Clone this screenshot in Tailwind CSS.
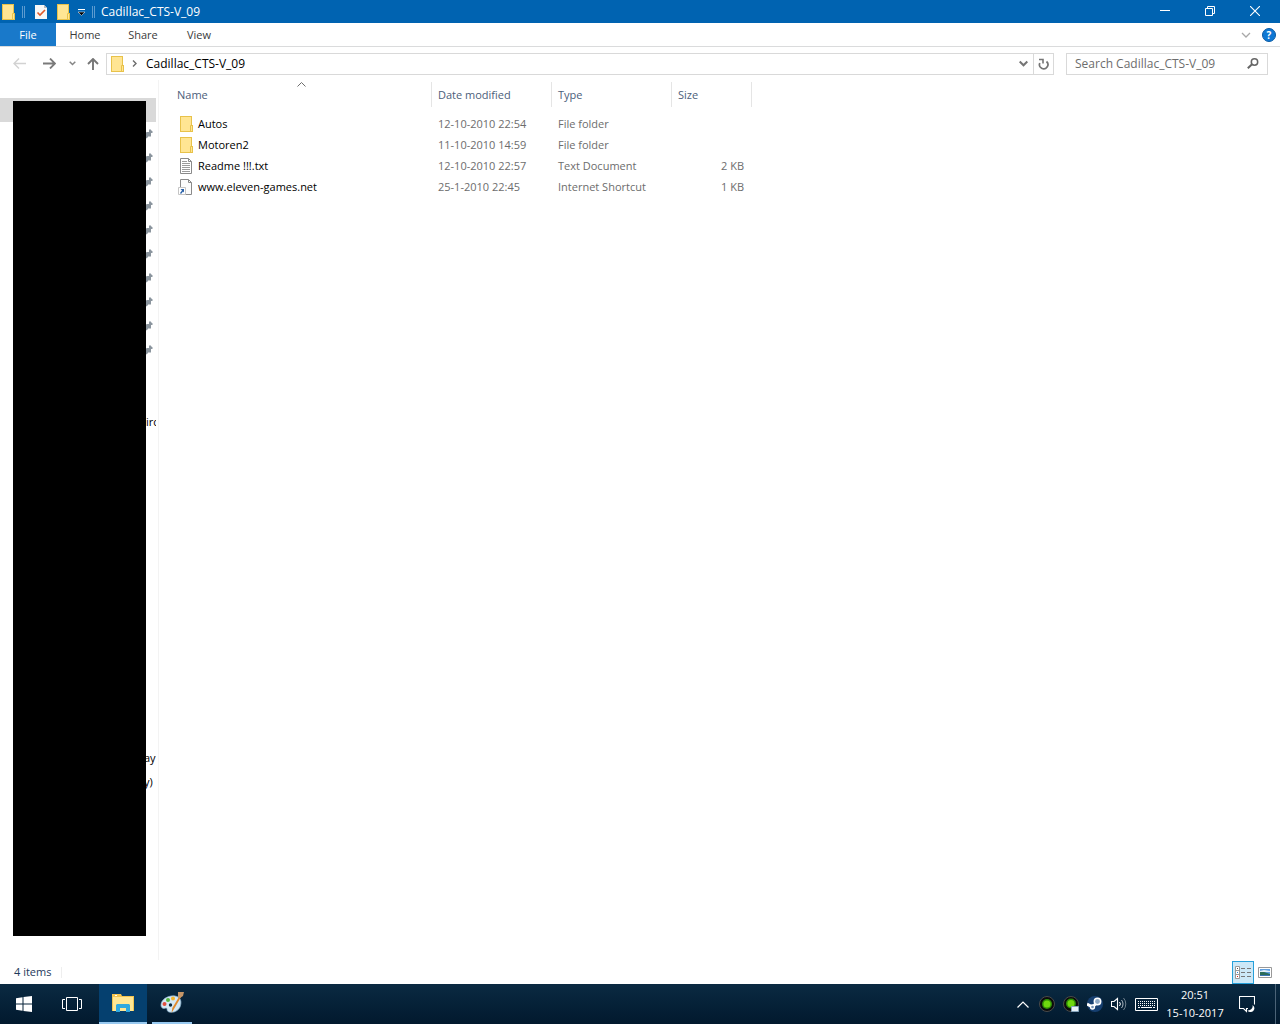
<!DOCTYPE html>
<html lang="en">
<head>
  <meta charset="UTF-8" />
  <meta name="viewport" content="width=device-width, initial-scale=1.0"/>
  <title>Cadillac_CTS-V_09</title>
  <script src="https://cdn.jsdelivr.net/npm/@tailwindcss/browser@4"></script>
</head>
<body class="h-screen flex flex-col overflow-hidden bg-white text-black text-[11px] leading-[16px] font-['Segoe_UI','Open_Sans',sans-serif]">

  <!-- Shared icons -->
  <svg class="hidden">
    <symbol id="folder" viewBox="0 0 13 16">
      <path d="M0 0h12v9h1v7H0z" fill="#e8c24a"/>
      <path d="M1 1h10v14H1z" fill="#ffe593"/>
      <path d="M11 10h1v5h-1z" fill="#ffe593"/>
      <path d="M10.500 15V9.500h2" stroke="#e8c24a" fill="none"/>
    </symbol>
    <symbol id="pin" viewBox="0 0 8 10">
      <path d="M4 1l1-1 3 3-1 1-1 0v3L5 8 4 7 2 9 0 10 0 4 2 3h2z" fill="#8b959e"/>
    </symbol>
  </svg>

  <!-- Title bar -->
  <header class="h-[23px] shrink-0 flex items-center bg-[#0063b1] text-white">
    <svg class="w-[13px] h-4 ml-[2px]"><use href="#folder"/></svg>
    <span class="w-[3px] h-3 ml-[7px] border-x border-[#5c9bd0]"></span>
    <button class="ml-[10px]" aria-label="Properties">
      <svg class="w-3 h-4" viewBox="0 0 12 16"><path d="M0 1h9l3 3v11H0z" fill="#f7f7f7"/><path d="M9 1v3h3" fill="#bbb"/><path d="M2.500 8.500L5 11l5-5" fill="none" stroke="#e0592a" stroke-width="1.600"/></svg>
    </button>
    <button class="ml-[10px]" aria-label="New folder"><svg class="w-[13px] h-4"><use href="#folder"/></svg></button>
    <button class="ml-2" aria-label="Customize Quick Access Toolbar">
      <svg class="w-[7px] h-[7px] mt-[2px]" viewBox="0 0 7 7"><path d="M0 .5h7" stroke="#fff"/><path d="M0 3h7L3.500 6.500z" fill="#000" stroke="#fff" stroke-width=".5"/></svg>
    </button>
    <span class="w-[3px] h-3 ml-[7px] border-x border-[#5c9bd0]"></span>
    <h1 class="ml-[6px] flex-1 text-[12px]">Cadillac_CTS-V_09</h1>
    <div class="flex h-full items-center pb-[2px] pr-[2px]">
      <button class="w-[45px] h-full flex items-center justify-center" aria-label="Minimize"><svg class="w-[10px] h-[10px]" viewBox="0 0 10 10"><path d="M0 4.500h10" stroke="#fff"/></svg></button>
      <button class="w-[45px] h-full flex items-center justify-center" aria-label="Restore"><svg class="w-[10px] h-[10px]" viewBox="0 0 10 10"><path d="M.5 2.500h7v7h-7zM2.500 2.500v-2h7v7h-2" fill="none" stroke="#fff"/></svg></button>
      <button class="w-[46px] h-full flex items-center justify-center" aria-label="Close"><svg class="w-[10px] h-[10px]" viewBox="0 0 10 10"><path d="M0 0l10 10M10 0L0 10" stroke="#fff" stroke-width="1.100"/></svg></button>
    </div>
  </header>

  <!-- Ribbon tabs -->
  <div class="h-6 shrink-0 flex items-stretch border-b border-[#dadbdc] text-[#3b3b3b]">
    <button class="w-[56px] bg-[#1979ca] text-white">File</button>
    <button class="w-[58px]">Home</button>
    <button class="w-[58px]">Share</button>
    <button class="w-[54px]">View</button>
    <div class="ml-auto flex items-center gap-[11px] pr-1">
      <button aria-label="Expand the ribbon"><svg class="w-[10px] h-[6px]" viewBox="0 0 10 6"><path d="M1 1l4 4 4-4" fill="none" stroke="#a8a8a8" stroke-width="1.300"/></svg></button>
      <button class="w-[14px] h-[14px] rounded-full bg-[#0f78d4] border border-[#0a5ba5] text-white text-[10px] leading-[12px] font-bold" aria-label="Help">?</button>
    </div>
  </div>

  <!-- Navigation and address -->
  <div class="h-[33px] shrink-0 flex items-center pr-3">
    <button class="ml-[13px]" aria-label="Back"><svg class="w-[13px] h-[11px]" viewBox="0 0 13 11"><path d="M13 5.500H1M6 .5l-5 5 5 5" fill="none" stroke="#d2d2d2" stroke-width="1.400"/></svg></button>
    <button class="ml-[17px]" aria-label="Forward"><svg class="w-[13px] h-[11px]" viewBox="0 0 13 11"><path d="M0 5.500h12M7 .5l5 5-5 5" fill="none" stroke="#7a7a7a" stroke-width="1.800"/></svg></button>
    <button class="ml-[13px]" aria-label="Recent locations"><svg class="w-[7px] h-[5px]" viewBox="0 0 7 5"><path d="M.7.700l2.800 2.800L6.300.7" fill="none" stroke="#858585" stroke-width="1.500"/></svg></button>
    <button class="ml-[11px]" aria-label="Up"><svg class="w-3 h-[12px]" viewBox="0 0 12 12"><path d="M6 12V1M1 6l5-5 5 5" fill="none" stroke="#767676" stroke-width="1.900"/></svg></button>
    <div class="ml-[7px] h-[22px] flex-1 flex items-center border border-[#d9d9d9]">
      <svg class="w-[13px] h-4 ml-1"><use href="#folder"/></svg>
      <svg class="w-[5px] h-[7px] ml-2" viewBox="0 0 5 7"><path d="M1 .5l3 3-3 3" fill="none" stroke="#6b6b6b" stroke-width="1.400"/></svg>
      <a href="#" class="ml-[9px] flex-1 text-[12px] leading-[18px]">Cadillac_CTS-V_09</a>
      <button class="mr-[5px]" aria-label="Previous locations"><svg class="w-[9px] h-[7px]" viewBox="0 0 9 7"><path d="M.7 1.500l3.800 3.800 3.800-3.800" fill="none" stroke="#757575" stroke-width="2"/></svg></button>
      <button class="w-[20px] h-full flex items-center justify-center border-l border-[#d9d9d9]" aria-label="Refresh"><svg class="w-[11px] h-[12px]" viewBox="0 0 11 12"><path d="M8.500 3.500A4.200 4.200 0 1 1 1.800 5" fill="none" stroke="#757575" stroke-width="1.700"/><path d="M1 1.500h4v4" fill="none" stroke="#757575" stroke-width="1.600"/></svg></button>
    </div>
    <form class="ml-3 w-[202px] h-[22px] flex items-center border border-[#d9d9d9] pl-2 pr-2">
      <input type="text" aria-label="Search" placeholder="Search Cadillac_CTS-V_09" class="min-w-0 flex-1 text-[12px] outline-none placeholder:text-[#6d6d6d]"/>
      <button aria-label="Start search"><svg class="w-3 h-[11px]" viewBox="0 0 12 11"><circle cx="7.500" cy="4" r="3.200" fill="none" stroke="#666" stroke-width="1.500"/><path d="M5 6.300L.8 10.300" stroke="#666" stroke-width="2"/></svg></button>
    </form>
  </div>

  <!-- Panes -->
  <main class="flex-1 min-h-0 flex">
    <nav class="relative w-[159px] shrink-0 overflow-hidden border-r border-[#f3f3f3] pt-[18px] pr-[2px]">
      <div class="h-6 bg-[#d9d9d9]"></div>
      <ul id="pins"></ul>
      <div class="mt-6 h-6"></div>
      <div class="h-6 pl-[146px] leading-6 overflow-hidden whitespace-nowrap">irc</div>
      <div class="mt-[312px] h-6 pl-[144px] leading-6 whitespace-nowrap">ay</div>
      <div class="h-6 pl-[144px] leading-6 whitespace-nowrap">y)</div>
      <div class="absolute left-[13px] right-[12px] top-[21px] bottom-6 bg-black"></div>
    </nav>

    <div class="flex-1 pt-[2px]">
      <table class="table-fixed border-separate border-spacing-0 w-[593px] text-[#6d6d6d]">
        <thead class="text-[#4c607a]">
          <tr class="h-[25px] text-left">
            <th class="relative w-[273px] pl-[18px] font-normal border-r border-[#e5e5e5]">Name
              <svg class="absolute left-[138px] top-0 w-[9px] h-[5px]" viewBox="0 0 9 5"><path d="M.5 4.500l4-4 4 4" fill="none" stroke="#6d6d6d"/></svg>
            </th>
            <th class="w-[120px] pl-[6px] font-normal border-r border-[#e5e5e5]">Date modified</th>
            <th class="w-[120px] pl-[6px] font-normal border-r border-[#e5e5e5]">Type</th>
            <th class="w-[80px] pl-[6px] font-normal border-r border-[#e5e5e5]">Size</th>
          </tr>
          <tr class="h-[6px]"></tr>
        </thead>
        <tbody>
          <tr class="h-[21px]">
            <td class="pl-[21px]"><a href="#" class="flex items-center gap-[5px] text-black"><svg class="w-[13px] h-4 shrink-0"><use href="#folder"/></svg>Autos</a></td>
            <td class="pl-[6px]">12-10-2010 22:54</td><td class="pl-[6px]">File folder</td><td></td>
          </tr>
          <tr class="h-[21px]">
            <td class="pl-[21px]"><a href="#" class="flex items-center gap-[5px] text-black"><svg class="w-[13px] h-4 shrink-0"><use href="#folder"/></svg>Motoren2</a></td>
            <td class="pl-[6px]">11-10-2010 14:59</td><td class="pl-[6px]">File folder</td><td></td>
          </tr>
          <tr class="h-[21px]">
            <td class="pl-[21px]"><a href="#" class="flex items-center gap-[5px] text-black">
              <svg class="w-[13px] h-4 shrink-0" viewBox="0 0 13 16"><path d="M.5.5h8l3 3v12H.5z" fill="#fff" stroke="#8a8a8a"/><path d="M8.500.5v3h3" fill="none" stroke="#8a8a8a"/><path d="M2 3.500h5M2 5.500h8M2 7.500h8M2 9.500h8M2 11.500h8M2 13.500h8" stroke="#9b9b9b"/></svg>Readme !!!.txt</a></td>
            <td class="pl-[6px]">12-10-2010 22:57</td><td class="pl-[6px]">Text Document</td><td class="pr-2 text-right">2 KB</td>
          </tr>
          <tr class="h-[21px]">
            <td class="pl-[19px]"><a href="#" class="flex items-center gap-[5px] text-black">
              <svg class="w-[15px] h-4 shrink-0" viewBox="0 0 15 16"><path d="M2.500.5h8l3 3v12h-11z" fill="#fcfcfc" stroke="#8a8a8a"/><path d="M10.500.5v3h3" fill="none" stroke="#8a8a8a"/><path d="M.5 8.500h7v7h-7z" fill="#fff" stroke="#c5c5c5"/><path d="M2.500 10H6v3.500l-1-1L3 15l-1-1 2-2.500z" fill="#2860a8"/></svg>www.eleven-games.net</a></td>
            <td class="pl-[6px]">25-1-2010 22:45</td><td class="pl-[6px]">Internet Shortcut</td><td class="pr-2 text-right">1 KB</td>
          </tr>
        </tbody>
      </table>
    </div>
  </main>

  <!-- Status bar -->
  <div class="h-6 shrink-0 flex items-center pl-[14px] pr-2 text-[#1e395b]">
    <span class="leading-[18px]">4 items</span>
    <span class="h-[11px] ml-[10px] border-l border-[#eee]"></span>
    <button class="ml-auto mt-[1px] w-[22px] h-[23px] flex items-center justify-center bg-[#cce8f7] border border-[#26a0da]" aria-label="Details view">
      <svg class="w-4 h-[13px]" viewBox="0 0 16 13"><path d="M.5.5h4v12h-4zM.5 4.500h4M.5 8.500h4" fill="#fff" stroke="#999"/><path d="M2 2h1v1H2z" fill="#555"/><path d="M2 6h1v1H2z" fill="#2780d8"/><path d="M2 10h1v1H2z" fill="#d22"/><path d="M6 2.500h4m2 0h4M6 6.500h4m2 0h4M6 10.500h4m2 0h4" stroke="#777"/></svg>
    </button>
    <button class="ml-1" aria-label="Large icons view">
      <svg class="w-[14px] h-[11px]" viewBox="0 0 14 11"><path d="M.5.5h13v10H.5z" fill="#fff" stroke="#999"/><path d="M2 2h10v7H2z" fill="#5f9fe0"/><path d="M2 4l4-1 6 1v1H2z" fill="#e3eff8"/><path d="M2 5l4 0 6 2v1H2z" fill="#2b6b58"/><path d="M2 8h10v1H2z" fill="#3b74b4"/></svg>
    </button>
  </div>

  <!-- Taskbar -->
  <footer class="h-10 shrink-0 flex items-stretch bg-linear-to-b from-[#0b2a42] to-[#02192e] text-white">
    <button class="w-12 flex items-center justify-center" aria-label="Start">
      <svg class="w-4 h-4" viewBox="0 0 16 16"><path d="M0 2.200L6.500 1.300v6.200H0zM7.500 1.100L16 0v7.500H7.500zM0 8.500h6.500v6.200L0 13.800zM7.500 8.500H16V16l-8.500-1.100z" fill="#fff"/></svg>
    </button>
    <button class="w-12 flex items-center justify-center" aria-label="Task view">
      <svg class="w-5 h-[14px]" viewBox="0 0 20 14"><path d="M4.500.5h11v13h-11zM3 2.500H.5v9H3M17 2.500h2.500v9H17" fill="none" stroke="#fff"/></svg>
    </button>
    <button class="ml-[3px] w-12 flex items-center justify-center bg-[#05406f] border-b-2 border-[#98c9f0]" aria-label="File Explorer">
      <svg class="w-[22px] h-[18px]" viewBox="0 0 22 18"><path d="M0 0h9l1 2h12v15H0z" fill="#f2c44f"/><path d="M1 3h20v14H1z" fill="#ffe794"/><path d="M3 1h2v1H3z" fill="#fff"/><path d="M4 11l1-1h12l1 1v7h-4v-4H8v4H4z" fill="#2fa9e0"/></svg>
    </button>
    <button class="ml-[5px] w-10 flex items-center justify-center border-b-2 border-[#98c9f0]" aria-label="Paint">
      <svg class="w-6 h-6" viewBox="0 0 24 24"><path d="M1 14C1 8 9 4 15 5c6 1 7 6 5 11-2 4-6 6-11 5-3-1-1-4-3-4-3 1-5 0-5-3z" fill="#d4e8f5" stroke="#8eb8d3" stroke-width=".7"/><circle cx="4.500" cy="13" r="2" fill="#df4e3f"/><circle cx="8" cy="9" r="2" fill="#56b63f"/><circle cx="13" cy="7.500" r="2" fill="#f3b52c"/><circle cx="10.500" cy="14" r="1.700" fill="#0b2a42"/><path d="M19.500 5l1.500 1-7 12-2.500 4 .8-5z" fill="#e28a2d"/><path d="M18 1l6 0-1 4-3 2-2-1z" fill="#c59668"/></svg>
    </button>

    <div class="ml-auto flex items-center">
      <button aria-label="Show hidden icons"><svg class="w-3 h-[7px]" viewBox="0 0 12 7"><path d="M.5 6.500L6 1l5.500 5.500" fill="none" stroke="#fff" stroke-width="1.200"/></svg></button>
      <svg class="ml-[10px] w-4 h-4" viewBox="0 0 16 16"><circle cx="8" cy="8" r="7.500" fill="#0c0c0c" stroke="#4a4a4a"/><circle cx="8" cy="8" r="5" fill="#2f8f06"/><circle cx="8" cy="8" r="3.500" fill="#6fd80e"/></svg>
      <svg class="ml-2 w-4 h-4" viewBox="0 0 16 16"><circle cx="8" cy="8" r="7.500" fill="#0c0c0c" stroke="#4a4a4a"/><circle cx="8" cy="7.500" r="5" fill="#2f8f06"/><circle cx="8" cy="7.500" r="3.500" fill="#6fd80e"/><path d="M8.500 10.500h7v5h-7z" fill="#e8f1f7" stroke="#86a5bd"/></svg>
      <svg class="ml-2 w-4 h-4" viewBox="0 0 16 16"><circle cx="8" cy="8" r="8" fill="#163f70"/><path d="M0 8l5.500 3 4-4" stroke="#fff" stroke-width="3" fill="none"/><circle cx="10.500" cy="5.500" r="3.200" fill="#8fa9c4" stroke="#fff" stroke-width="1.500"/><circle cx="5.500" cy="11" r="2" fill="#7895b5" stroke="#fff" stroke-width="1.300"/></svg>
      <svg class="ml-2 w-4 h-[14px]" viewBox="0 0 16 14"><path d="M.5 4.500H3l3.500-3v11L3 9.500H.5z" fill="none" stroke="#fff" stroke-width="1.100"/><path d="M8.500 5a3 3 0 0 1 0 4" fill="none" stroke="#fff"/><path d="M10.500 3a6 6 0 0 1 0 8" fill="none" stroke="#b0bcc6"/><path d="M12.500 1a9 9 0 0 1 0 12" fill="none" stroke="#71828f"/></svg>
      <svg class="ml-2 w-[23px] h-[13px]" viewBox="0 0 23 13"><path d="M.5.5h22v12H.5z" fill="none" stroke="#fff"/><path d="M3 3.500h17M3 5.500h17M3 7.500h17" stroke="#fff" stroke-dasharray="1 1"/><path d="M3 9.500h2m1 0h11m1 0h2" stroke="#fff"/></svg>
      <div class="ml-2 w-[58px] text-center leading-[18px]">
        <div>20:51</div>
        <div class="whitespace-nowrap">15-10-2017</div>
      </div>
      <button class="ml-[15px]" aria-label="Action Center"><svg class="w-4 h-[17px]" viewBox="0 0 16 17"><path d="M9 12.500H7.500v3l-3-3h-4V.5h15v8" fill="none" stroke="#fff" stroke-width="1.100"/><path d="M13.500 9a3.800 3.800 0 1 1-5 5.500 4.500 4.500 0 0 0 5-5.500z" fill="#fff"/></svg></button>
      <span class="ml-5 mr-1 h-full border-l border-[#4b6377]"></span>
    </div>
  </footer>

  <script>
    // pinned quick access entries
    document.getElementById('pins').innerHTML = Array(10).fill(
      '<li class="h-6 flex items-center justify-end pr-[3px] pb-[1px]"><svg class="w-2 h-[10px]"><use href="#pin"/></svg></li>'
    ).join('');
  </script>
</body>
</html>
